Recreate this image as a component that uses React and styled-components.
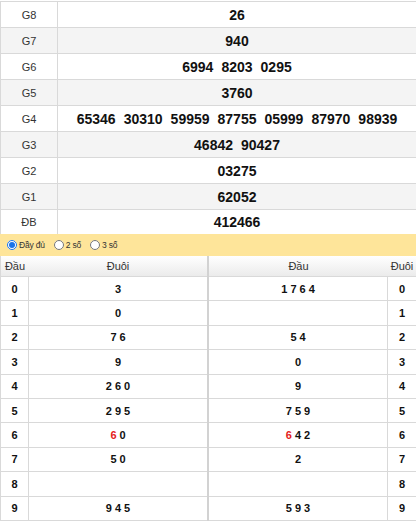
import React from 'react'
import styled, { createGlobalStyle } from 'styled-components'

const GlobalStyle = createGlobalStyle`
    body {
        margin: 0;
        background: #fff;
        font-family: "Liberation Sans", Arial, sans-serif;
        color: #222;
    }
`

const prizes = [
    { name: 'G8', nums: ['26'] },
    { name: 'G7', nums: ['940'] },
    { name: 'G6', nums: ['6994', '8203', '0295'] },
    { name: 'G5', nums: ['3760'] },
    { name: 'G4', nums: ['65346', '30310', '59959', '87755', '05999', '87970', '98939'] },
    { name: 'G3', nums: ['46842', '90427'] },
    { name: 'G2', nums: ['03275'] },
    { name: 'G1', nums: ['62052'] },
    { name: 'ĐB', nums: ['412466'] },
]

// dau -> duoi list, duoi -> dau list ; first item flagged red when it comes from the special prize
const headRows = [
    ['3'], ['0'], ['7', '6'], ['9'], ['2', '6', '0'], ['2', '9', '5'],
    [{ v: '6', red: true }, '0'], ['5', '0'], [], ['9', '4', '5'],
]
const tailRows = [
    ['1', '7', '6', '4'], [], ['5', '4'], ['0'], ['9'], ['7', '5', '9'],
    [{ v: '6', red: true }, '4', '2'], ['2'], [], ['5', '9', '3'],
]

export default function App() {
    return (
        <Page>
            <GlobalStyle />
            <ResultTable>
                {prizes.map((p, i) => (
                    <PrizeRow key={p.name} $alt={i % 2 === 1} $last={i === prizes.length - 1}>
                        <PrizeName>{p.name}</PrizeName>
                        <PrizeNums>
                            {p.nums.map((n) => <span key={n}>{n}</span>)}
                        </PrizeNums>
                    </PrizeRow>
                ))}
            </ResultTable>

            <FilterBar>
                <Option><Radio type="radio" name="mode" defaultChecked />Đầy đủ</Option>
                <Option><Radio type="radio" name="mode" />2 số</Option>
                <Option><Radio type="radio" name="mode" />3 số</Option>
            </FilterBar>

            <Loto>
                <Half $side="left">
                    <Head $side="left">
                        <span>Đầu</span>
                        <span>Đuôi</span>
                    </Head>
                    {headRows.map((list, i) => (
                        <LotoRow key={i} $side="left">
                            <Key>{i}</Key>
                            <Values>{renderList(list)}</Values>
                        </LotoRow>
                    ))}
                </Half>
                <Half $side="right">
                    <Head $side="right">
                        <span>Đầu</span>
                        <span>Đuôi</span>
                    </Head>
                    {tailRows.map((list, i) => (
                        <LotoRow key={i} $side="right">
                            <Values>{renderList(list)}</Values>
                            <Key>{i}</Key>
                        </LotoRow>
                    ))}
                </Half>
            </Loto>
        </Page>
    )
}

function renderList(list) {
    return list.map((item, i) => {
        const v = typeof item === 'string' ? item : item.v
        const red = typeof item === 'object' && item.red
        return <Digit key={i} $red={red}>{v}</Digit>
    })
}

const Page = styled.div`
    width: 416px;
    padding-top: 1px;
`

const ResultTable = styled.div`
    border-top: 1px solid #d9d9d9;
    border-left: 1px solid #d9d9d9;
`

const PrizeRow = styled.div`
    display: grid;
    grid-template-columns: 57px 1fr;
    height: ${(p) => (p.$last ? '24px' : '25px')};
    border-bottom: ${(p) => (p.$last ? 'none' : '1px solid #d9d9d9')};
    background: ${(p) => (p.$alt ? '#f4f4f4' : '#fff')};
`

const PrizeName = styled.div`
    display: flex;
    align-items: center;
    justify-content: center;
    border-right: 1px solid #d9d9d9;
    font-size: 11px;
    color: #333;
`

const PrizeNums = styled.div`
    display: flex;
    align-items: center;
    justify-content: center;
    gap: 8px;
    font-size: 14px;
    font-weight: bold;
    color: #111;
`

const FilterBar = styled.div`
    display: flex;
    align-items: center;
    height: 22px;
    padding-left: 6px;
    gap: 8px;
    background: #fee59a;
`

const Option = styled.label`
    display: flex;
    align-items: center;
    font-size: 8.5px;
    letter-spacing: -0.2px;
    color: #333;
`

const Radio = styled.input`
    width: 10px;
    height: 10px;
    margin: 0 2px 0 1px;
    accent-color: #1a73e8;
`

const Loto = styled.div`
    display: flex;
`

const Half = styled.div`
    width: 208px;
    border-left: ${(p) => (p.$side === 'left' ? '1px solid #d9d9d9' : '1px solid #d2d2d2')};
    border-right: ${(p) => (p.$side === 'left' ? '1px solid #d2d2d2' : 'none')};
    box-sizing: border-box;
`

const Head = styled.div`
    display: grid;
    grid-template-columns: ${(p) => (p.$side === 'left' ? '28px 1fr' : '1fr 28px')};
    height: 20px;
    align-items: center;
    text-align: center;
    font-size: 11px;
    color: #333;
    background: linear-gradient(#ffffff, #ebebeb);
`

const LotoRow = styled.div`
    display: grid;
    grid-template-columns: ${(p) => (p.$side === 'left' ? '28px 1fr' : '1fr 28px')};
    height: 24.4px;
    border-top: 1px solid #d9d9d9;
    box-sizing: border-box;
    font-size: 11px;
    font-weight: bold;
    color: #111;

    &:last-child {
        border-bottom: 1px solid #d9d9d9;
        height: 25.4px;
    }

    & > div:first-child {
        border-right: 1px solid #d9d9d9;
    }
`

const Key = styled.div`
    display: flex;
    align-items: center;
    justify-content: center;
`

const Values = styled.div`
    display: flex;
    align-items: center;
    justify-content: center;
    gap: 3px;
`

const Digit = styled.span`
    color: ${(p) => (p.$red ? '#e41b1b' : 'inherit')};
`
